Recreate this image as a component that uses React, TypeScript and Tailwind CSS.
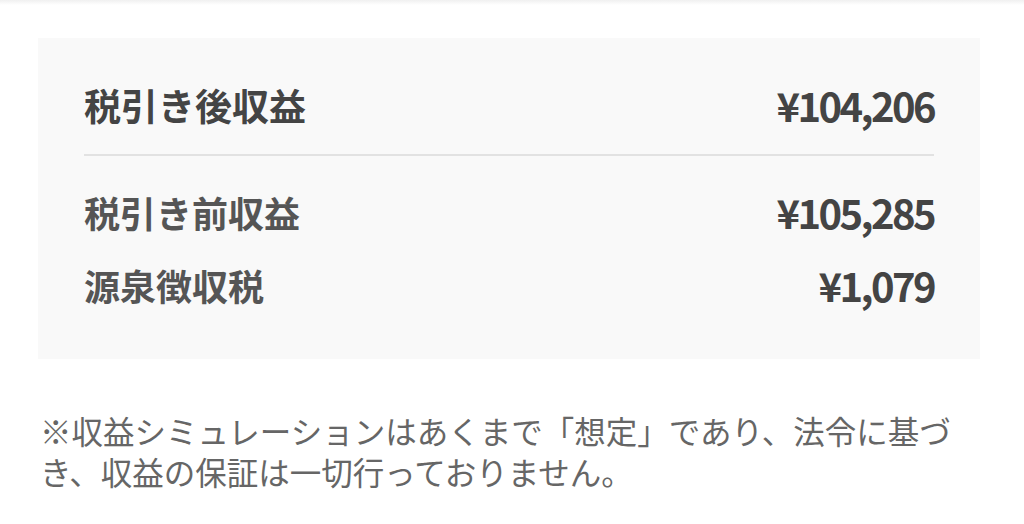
const FONT = "font-['Noto_Sans_CJK_JP','Noto_Sans',sans-serif]";

interface Row {
  label: string;
  value: string;
}

const SUB_ROWS: Row[] = [
  { label: "税引き前収益", value: "¥105,285" },
  { label: "源泉徴収税", value: "¥1,079" },
];

export default function App() {
  return (
    <div className={`w-[1024px] h-[524px] bg-white overflow-hidden ${FONT}`}>
      {/* faint top edge */}
      <div className="h-[5px] bg-gradient-to-b from-[#f0f0f0] to-white" />

      {/* Summary card */}
      <div className="ml-[38px] w-[942px] mt-[33px] bg-[#f9f9f9] px-[46px] pt-[47px] pb-[54px]">
        <div className="flex items-center justify-between h-[40px] text-[#444]">
          <span className="text-[37px] font-bold leading-[40px]">税引き後収益</span>
          <span className="text-[40px] font-bold leading-[40px] tracking-[-2.6px]">¥104,206</span>
        </div>

        <div className="mt-[29px] h-[2px] bg-[#e2e2e2]" />

        <div className="mt-[36px] flex flex-col gap-[33px]">
          {SUB_ROWS.map((row) => (
            <div key={row.label} className="flex items-center justify-between h-[40px]">
              <span className="text-[36px] font-bold leading-[40px] text-[#555]">{row.label}</span>
              <span className="text-[40px] font-bold leading-[40px] tracking-[-2.6px] text-[#444]">
                {row.value}
              </span>
            </div>
          ))}
        </div>
      </div>

      {/* Disclaimer */}
      <p className="mt-[51px] px-[40px] pr-[60px] text-[31.5px] leading-[41px] text-[#666]">
        ※収益シミュレーションはあくまで「想定」であり、法令に基づき、収益の保証は一切行っておりません。
      </p>
    </div>
  );
}
